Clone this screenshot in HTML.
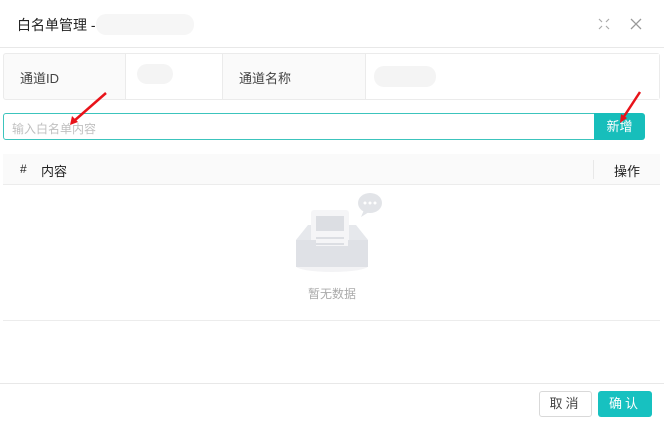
<!DOCTYPE html>
<html><head><meta charset="utf-8"><style>
*{box-sizing:border-box;margin:0;padding:0}
body{width:664px;height:422px;background:#fff;font-family:"Liberation Sans","Noto Sans CJK SC",sans-serif;font-size:13px;color:#333;position:relative;overflow:hidden}
.a{position:absolute}
</style></head><body>
<div class="a" style="left:17px;top:15px;font-size:14px;color:#222">白名单管理 -</div>
<div class="a" style="left:96px;top:14px;width:98px;height:21px;background:#f6f6f6;border-radius:10px"></div>
<svg class="a" style="left:597px;top:17px" width="14" height="14" viewBox="0 0 14 14" stroke="#aaa" stroke-width="1.2" fill="none"><path d="M2 2l3 3M12 2l-3 3M2 12l3-3M12 12l-3-3"/></svg>
<svg class="a" style="left:629px;top:17px" width="14" height="14" viewBox="0 0 14 14" stroke="#999" stroke-width="1.3"><path d="M2 2l10 10M12 2L2 12"/></svg>
<div class="a" style="left:0;top:47px;width:664px;height:1px;background:#e8e8e8"></div>
<div class="a" style="left:3px;top:53px;width:657px;height:47px;border:1px solid #ebebeb;border-radius:3px;background:#fafafa"></div>
<div class="a" style="left:125px;top:54px;width:1px;height:45px;background:#ebebeb"></div>
<div class="a" style="left:126px;top:54px;width:96px;height:45px;background:#fff"></div>
<div class="a" style="left:222px;top:54px;width:1px;height:45px;background:#ebebeb"></div>
<div class="a" style="left:365px;top:54px;width:1px;height:45px;background:#ebebeb"></div>
<div class="a" style="left:366px;top:54px;width:293px;height:45px;background:#fff"></div>
<div class="a" style="left:20px;top:68px;color:#444">通道ID</div>
<div class="a" style="left:137px;top:64px;width:36px;height:20px;background:#f4f4f4;border-radius:10px"></div>
<div class="a" style="left:239px;top:68px;color:#444">通道名称</div>
<div class="a" style="left:374px;top:66px;width:62px;height:21px;background:#f4f4f4;border-radius:10px"></div>
<div class="a" style="left:3px;top:113px;width:593px;height:27px;border:1px solid #3cc4bd;border-radius:3px 0 0 3px"></div>
<div class="a" style="left:12px;top:120px;font-size:12px;color:#c0c0c0">输入白名单内容</div>
<div class="a" style="left:594px;top:113px;width:51px;height:27px;background:#17bebb;border-radius:0 3px 3px 0;color:#fff;font-size:13px;text-align:center;line-height:27px">新增</div>
<div class="a" style="left:3px;top:154px;width:657px;height:31px;background:#fafafa;border-bottom:1px solid #ececec"></div>
<div class="a" style="left:20px;top:162px;font-size:12px;color:#222">#</div>
<div class="a" style="left:41px;top:161px;color:#222">内容</div>
<div class="a" style="left:593px;top:160px;width:1px;height:19px;background:#e8e8e8"></div>
<div class="a" style="left:614px;top:161px;color:#222">操作</div>
<svg class="a" style="left:292px;top:190px" width="96" height="86" viewBox="0 0 96 86">
<ellipse cx="40" cy="76" rx="36" ry="6" fill="#f3f3f5"/>
<path d="M4 50l12-15h48l12 15v25H4z" fill="#e6e8ec"/>
<rect x="19" y="20" width="38" height="48" rx="3" fill="#f5f5f7"/>
<rect x="24" y="26" width="28" height="15" fill="#dcdee3"/>
<rect x="24" y="47" width="28" height="2" fill="#dcdee3"/>
<rect x="24" y="53" width="28" height="2" fill="#dcdee3"/>
<path d="M4 50h20v6h32v-6h20v27H4z" fill="#dfe1e6"/>
<ellipse cx="78" cy="13" rx="12" ry="10" fill="#e2e4e8"/>
<path d="M72 20l-3 7 8-5z" fill="#e2e4e8"/>
<circle cx="73" cy="13" r="1.5" fill="#fff"/><circle cx="78" cy="13" r="1.5" fill="#fff"/><circle cx="83" cy="13" r="1.5" fill="#fff"/>
</svg>
<div class="a" style="left:308px;top:285px;font-size:12px;color:#aaa">暂无数据</div>
<div class="a" style="left:3px;top:320px;width:657px;height:1px;background:#ececec"></div>
<div class="a" style="left:0;top:383px;width:664px;height:1px;background:#e8e8e8"></div>
<div class="a" style="left:539px;top:391px;width:53px;height:26px;border:1px solid #d9d9d9;border-radius:3px;text-align:center;line-height:24px;color:#444;letter-spacing:3px">取消</div>
<div class="a" style="left:598px;top:391px;width:54px;height:26px;background:#17c1c0;border-radius:3px;text-align:center;line-height:26px;color:#fff;letter-spacing:3px">确认</div>
<svg class="a" style="left:0;top:0" width="664" height="422">
<path d="M106 93L74 121" stroke="#e8131a" stroke-width="2.5"/><path d="M70 125l2-9 6 6z" fill="#e8131a"/>
<path d="M640 92L623 118" stroke="#e8131a" stroke-width="2.5"/><path d="M620 123l1-9 6 4z" fill="#e8131a"/>
</svg>
</body></html>
